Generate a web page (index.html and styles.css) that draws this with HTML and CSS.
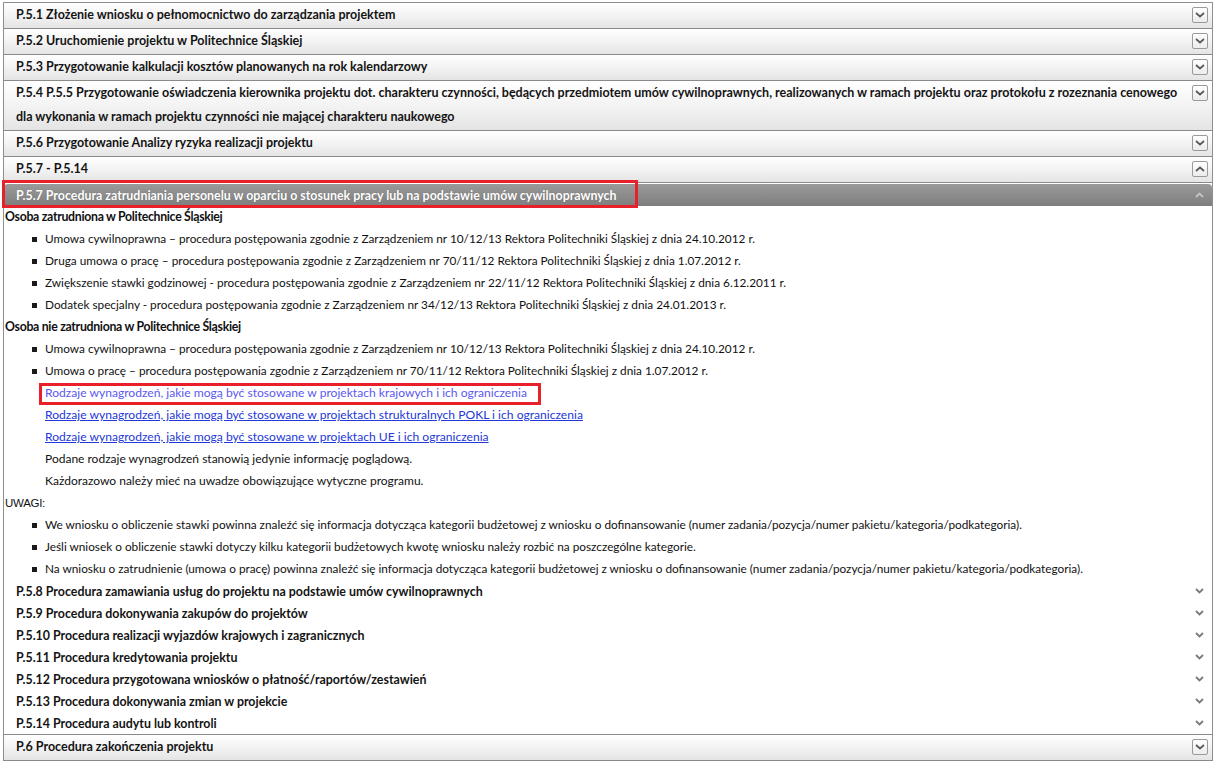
FILE: index.html
```html
<!DOCTYPE html>
<html lang="pl">
<head>
<meta charset="utf-8">
<title>Procedury</title>
<link rel="stylesheet" href="styles.css">
</head>
<body>
<div class="accordion">
  <div class="hdr"><span class="hdr-text">P.5.1 Złożenie wniosku o pełnomocnictwo do zarządzania projektem</span><span class="btn"><svg width="10" height="6" viewBox="0 0 10 6"><path d="M1 1 L5 4.5 L9 1" stroke="#5a5a5a" stroke-width="1.8" fill="none"/></svg></span></div>
  <div class="hdr"><span class="hdr-text">P.5.2 Uruchomienie projektu w Politechnice Śląskiej</span><span class="btn"><svg width="10" height="6" viewBox="0 0 10 6"><path d="M1 1 L5 4.5 L9 1" stroke="#5a5a5a" stroke-width="1.8" fill="none"/></svg></span></div>
  <div class="hdr"><span class="hdr-text">P.5.3 Przygotowanie kalkulacji kosztów planowanych na rok kalendarzowy</span><span class="btn"><svg width="10" height="6" viewBox="0 0 10 6"><path d="M1 1 L5 4.5 L9 1" stroke="#5a5a5a" stroke-width="1.8" fill="none"/></svg></span></div>
  <div class="hdr"><span class="hdr-text">P.5.4 P.5.5 Przygotowanie oświadczenia kierownika projektu dot. charakteru czynności, będących przedmiotem umów cywilnoprawnych, realizowanych w ramach projektu oraz protokołu z rozeznania cenowego dla wykonania w ramach projektu czynności nie mającej charakteru naukowego</span><span class="btn"><svg width="10" height="6" viewBox="0 0 10 6"><path d="M1 1 L5 4.5 L9 1" stroke="#5a5a5a" stroke-width="1.8" fill="none"/></svg></span></div>
  <div class="hdr"><span class="hdr-text">P.5.6 Przygotowanie Analizy ryzyka realizacji projektu</span><span class="btn"><svg width="10" height="6" viewBox="0 0 10 6"><path d="M1 1 L5 4.5 L9 1" stroke="#5a5a5a" stroke-width="1.8" fill="none"/></svg></span></div>
  <div class="hdr"><span class="hdr-text">P.5.7 - P.5.14</span><span class="btn"><svg width="10" height="6" viewBox="0 0 10 6"><path d="M1 5 L5 1.5 L9 5" stroke="#5a5a5a" stroke-width="1.8" fill="none"/></svg></span></div>
  <div class="panel">
    <div class="sub active">
      <span class="sub-text">P.5.7 Procedura zatrudniania personelu w oparciu o stosunek pracy lub na podstawie umów cywilnoprawnych</span>
      <span class="mark mark-title"></span>
      <svg class="chev" width="9" height="6" viewBox="0 0 9 6"><path d="M1 5 L4.5 1.5 L8 5" stroke="#c4c4c4" stroke-width="1.8" fill="none"/></svg>
    </div>
    <div class="content">
      <div class="line strong">Osoba zatrudniona w Politechnice Śląskiej</div>
      <div class="line item">Umowa cywilnoprawna – procedura postępowania zgodnie z Zarządzeniem nr 10/12/13 Rektora Politechniki Śląskiej z dnia 24.10.2012 r.</div>
      <div class="line item">Druga umowa o pracę – procedura postępowania zgodnie z Zarządzeniem nr 70/11/12 Rektora Politechniki Śląskiej z dnia 1.07.2012 r.</div>
      <div class="line item">Zwiększenie stawki godzinowej - procedura postępowania zgodnie z Zarządzeniem nr 22/11/12 Rektora Politechniki Śląskiej z dnia 6.12.2011 r.</div>
      <div class="line item">Dodatek specjalny - procedura postępowania zgodnie z Zarządzeniem nr 34/12/13 Rektora Politechniki Śląskiej z dnia 24.01.2013 r.</div>
      <div class="line strong">Osoba nie zatrudniona w Politechnice Śląskiej</div>
      <div class="line item">Umowa cywilnoprawna – procedura postępowania zgodnie z Zarządzeniem nr 10/12/13 Rektora Politechniki Śląskiej z dnia 24.10.2012 r.</div>
      <div class="line item">Umowa o pracę – procedura postępowania zgodnie z Zarządzeniem nr 70/11/12 Rektora Politechniki Śląskiej z dnia 1.07.2012 r.</div>
      <div class="line plain marked"><a href="#" class="link hover">Rodzaje wynagrodzeń, jakie mogą być stosowane w projektach krajowych i ich ograniczenia</a><span class="mark mark-link"></span></div>
      <div class="line plain"><a href="#" class="link">Rodzaje wynagrodzeń, jakie mogą być stosowane w projektach strukturalnych POKL i ich ograniczenia</a></div>
      <div class="line plain"><a href="#" class="link">Rodzaje wynagrodzeń, jakie mogą być stosowane w projektach UE i ich ograniczenia</a></div>
      <div class="line plain">Podane rodzaje wynagrodzeń stanowią jedynie informację poglądową.</div>
      <div class="line plain">Każdorazowo należy mieć na uwadze obowiązujące wytyczne programu.</div>
      <div class="line note">UWAGI:</div>
      <div class="line item">We wniosku o obliczenie stawki powinna znaleźć się informacja dotycząca kategorii budżetowej z wniosku o dofinansowanie (numer zadania/pozycja/numer pakietu/kategoria/podkategoria).</div>
      <div class="line item">Jeśli wniosek o obliczenie stawki dotyczy kilku kategorii budżetowych kwotę wniosku należy rozbić na poszczególne kategorie.</div>
      <div class="line item">Na wniosku o zatrudnienie (umowa o pracę) powinna znaleźć się informacja dotycząca kategorii budżetowej z wniosku o dofinansowanie (numer zadania/pozycja/numer pakietu/kategoria/podkategoria).</div>
    </div>
    <div class="sub"><span class="sub-text">P.5.8 Procedura zamawiania usług do projektu na podstawie umów cywilnoprawnych</span><svg class="chev" width="9" height="6" viewBox="0 0 9 6"><path d="M1 1 L4.5 4.5 L8 1" stroke="#7a7a7a" stroke-width="1.8" fill="none"/></svg></div>
    <div class="sub"><span class="sub-text">P.5.9 Procedura dokonywania zakupów do projektów</span><svg class="chev" width="9" height="6" viewBox="0 0 9 6"><path d="M1 1 L4.5 4.5 L8 1" stroke="#7a7a7a" stroke-width="1.8" fill="none"/></svg></div>
    <div class="sub"><span class="sub-text">P.5.10 Procedura realizacji wyjazdów krajowych i zagranicznych</span><svg class="chev" width="9" height="6" viewBox="0 0 9 6"><path d="M1 1 L4.5 4.5 L8 1" stroke="#7a7a7a" stroke-width="1.8" fill="none"/></svg></div>
    <div class="sub"><span class="sub-text">P.5.11 Procedura kredytowania projektu</span><svg class="chev" width="9" height="6" viewBox="0 0 9 6"><path d="M1 1 L4.5 4.5 L8 1" stroke="#7a7a7a" stroke-width="1.8" fill="none"/></svg></div>
    <div class="sub"><span class="sub-text">P.5.12 Procedura przygotowana wniosków o płatność/raportów/zestawień</span><svg class="chev" width="9" height="6" viewBox="0 0 9 6"><path d="M1 1 L4.5 4.5 L8 1" stroke="#7a7a7a" stroke-width="1.8" fill="none"/></svg></div>
    <div class="sub"><span class="sub-text">P.5.13 Procedura dokonywania zmian w projekcie</span><svg class="chev" width="9" height="6" viewBox="0 0 9 6"><path d="M1 1 L4.5 4.5 L8 1" stroke="#7a7a7a" stroke-width="1.8" fill="none"/></svg></div>
    <div class="sub"><span class="sub-text">P.5.14 Procedura audytu lub kontroli</span><svg class="chev" width="9" height="6" viewBox="0 0 9 6"><path d="M1 1 L4.5 4.5 L8 1" stroke="#7a7a7a" stroke-width="1.8" fill="none"/></svg></div>
  </div>
  <div class="hdr"><span class="hdr-text">P.6 Procedura zakończenia projektu</span><span class="btn"><svg width="10" height="6" viewBox="0 0 10 6"><path d="M1 1 L5 4.5 L9 1" stroke="#5a5a5a" stroke-width="1.8" fill="none"/></svg></span></div>
</div>
</body>
</html>
```

FILE: styles.css
```css
html, body {
  margin: 0;
  padding: 0;
  background: #ffffff;
}

body {
  padding: 2px 0 0 3px;
  font-family: Lato, "Noto Sans", "Liberation Sans", sans-serif;
  font-size: 12px;
  color: #111;
}

.accordion {
  width: 1210px;
  box-sizing: border-box;
  border-left: 1px solid #8e8e8e;
  border-right: 1px solid #8e8e8e;
  border-top: 1px solid #8e8e8e;
}

.hdr {
  display: flex;
  align-items: flex-start;
  padding: 0 4px 1px 12px;
  line-height: 24px;
  background: linear-gradient(to bottom, #ffffff 0%, #f3f3f3 50%, #e4e4e4 100%);
  border-bottom: 1px solid #8a8a8a;
  font-weight: bold;
  font-size: 12.5px;
  color: #141414;
}

.hdr-text {
  flex: 1;
  padding-right: 8px;
}

.btn {
  flex: none;
  width: 14px;
  height: 14px;
  margin-top: 4px;
  border: 1px solid #9b9b9b;
  border-radius: 2px;
  background: linear-gradient(to bottom, #ffffff, #ececec);
  display: flex;
  align-items: center;
  justify-content: center;
}

.panel {
  padding-top: 1px;
  border-bottom: 1px solid #8a8a8a;
}

.sub {
  display: flex;
  align-items: center;
  height: 22px;
  padding: 0 8px 0 12px;
  font-weight: bold;
  font-size: 12.4px;
  color: #141414;
}

.sub-text {
  flex: 1;
}

.sub.active {
  position: relative;
  background: linear-gradient(to bottom, #9a9a9a, #7e7e7e);
  border-radius: 4px 4px 0 0;
  color: #ffffff;
  text-shadow: 0 0 1px rgba(0,0,0,0.3);
}

.chev {
  flex: none;
}

.mark {
  position: absolute;
  border: 3px solid #e8202a;
  box-sizing: border-box;
  pointer-events: none;
}

.mark-title {
  left: -2px;
  top: -4px;
  width: 636px;
  height: 28px;
}

.content {
  padding-left: 1px;
}

.line {
  height: 22px;
  line-height: 22px;
  white-space: nowrap;
}

.strong {
  font-weight: bold;
  font-size: 12.3px;
  letter-spacing: -0.3px;
}

.note {
  font-family: "Liberation Sans Narrow", "Liberation Sans", sans-serif;
  font-size: 11.5px;
  letter-spacing: -0.3px;
}

.item {
  display: flex;
  align-items: center;
  padding-left: 27px;
  font-size: 11.8px;
}

.item::before {
  content: "";
  flex: none;
  width: 5px;
  height: 5px;
  background: #1a1a1a;
  margin-right: 8px;
}

.plain {
  padding-left: 40px;
}

.marked {
  position: relative;
}

.mark-link {
  left: 34px;
  top: 1px;
  width: 502px;
  height: 22px;
}

.link {
  color: #2437d8;
  text-decoration: underline;
  font-size: 12.1px;
}

.link.hover {
  color: #5b57f2;
  text-decoration: none;
}
```
